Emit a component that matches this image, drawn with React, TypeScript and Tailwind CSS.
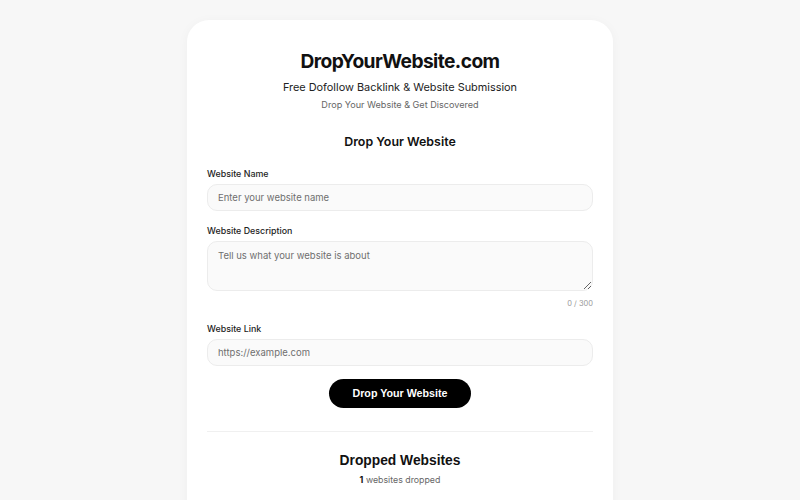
import React from "react";

export default function App() {
  return (
    <div
      className="min-h-[500px] w-full bg-[#f7f7f7] flex justify-center pt-5"
      style={{ fontFamily: "Inter, 'Noto Sans', sans-serif" }}
    >
      <div className="w-[426px] bg-white rounded-[22px] shadow-[0_2px_12px_rgba(0,0,0,0.04)] px-5 pt-[27px] pb-6 self-start">
        <h1 className="text-center text-[19.2px] font-bold tracking-[-0.03em] text-[#111] leading-[28px]">
          DropYourWebsite.com
        </h1>
        <p className="text-center text-[10.9px] text-[#222] mt-[5px] leading-[14px]">
          Free Dofollow Backlink &amp; Website Submission
        </p>
        <p className="text-center text-[9.1px] text-[#666] mt-[5px] leading-[12px]">
          Drop Your Website &amp; Get Discovered
        </p>
        <h2 className="text-center text-[12.4px] font-semibold text-[#111] mt-[22px] leading-[18px]">
          Drop Your Website
        </h2>

        <div className="mt-[17px]">
          <label className="block text-[8.9px] font-medium text-[#222] leading-[12px]">
            Website Name
          </label>
          <input
            className="mt-[4px] block w-full h-[27px] rounded-[10px] border border-[#ececec] bg-[#fafafa] px-[10px] text-[9.5px] placeholder:text-[#6f6f6f] outline-none"
            placeholder="Enter your website name"
          />
        </div>

        <div className="mt-[14px]">
          <label className="block text-[8.9px] font-medium text-[#222] leading-[12px]">
            Website Description
          </label>
          <textarea
            className="mt-[4px] block w-full h-[50px] rounded-[10px] border border-[#ececec] bg-[#fafafa] px-[10px] pt-[7px] text-[9.5px] leading-[13px] placeholder:text-[#6f6f6f] outline-none"
            placeholder="Tell us what your website is about"
          />
          <div className="text-right text-[7.5px] text-[#999] mt-[8px] leading-[10px]">0 / 300</div>
        </div>

        <div className="mt-[14px]">
          <label className="block text-[8.9px] font-medium text-[#222] leading-[12px]">
            Website Link
          </label>
          <input
            className="mt-[4px] block w-full h-[27px] rounded-[10px] border border-[#ececec] bg-[#fafafa] px-[10px] text-[9.5px] placeholder:text-[#6f6f6f] outline-none"
            placeholder="https://example.com"
          />
        </div>

        <div className="flex justify-center mt-[13px]">
          <button
            className="w-[142px] h-[29px] rounded-full bg-black text-white text-[10.7px] font-bold"
            style={{ fontFamily: "'Liberation Sans', Arial, sans-serif" }}
          >
            Drop Your Website
          </button>
        </div>

        <div className="border-t border-[#f0f0f0] mt-[23px]" />

        <h3
          className="text-center text-[13.8px] font-bold text-[#111] mt-[20px] leading-[18px]"
          style={{ fontFamily: "'Liberation Sans', Arial, sans-serif" }}
        >
          Dropped Websites
        </h3>
        <p className="text-center text-[8.8px] text-[#666] mt-[4px] leading-[12px]">
          <span className="font-bold text-[#111]">1</span> websites dropped
        </p>
        <div className="h-[40px]" />
      </div>
    </div>
  );
}
